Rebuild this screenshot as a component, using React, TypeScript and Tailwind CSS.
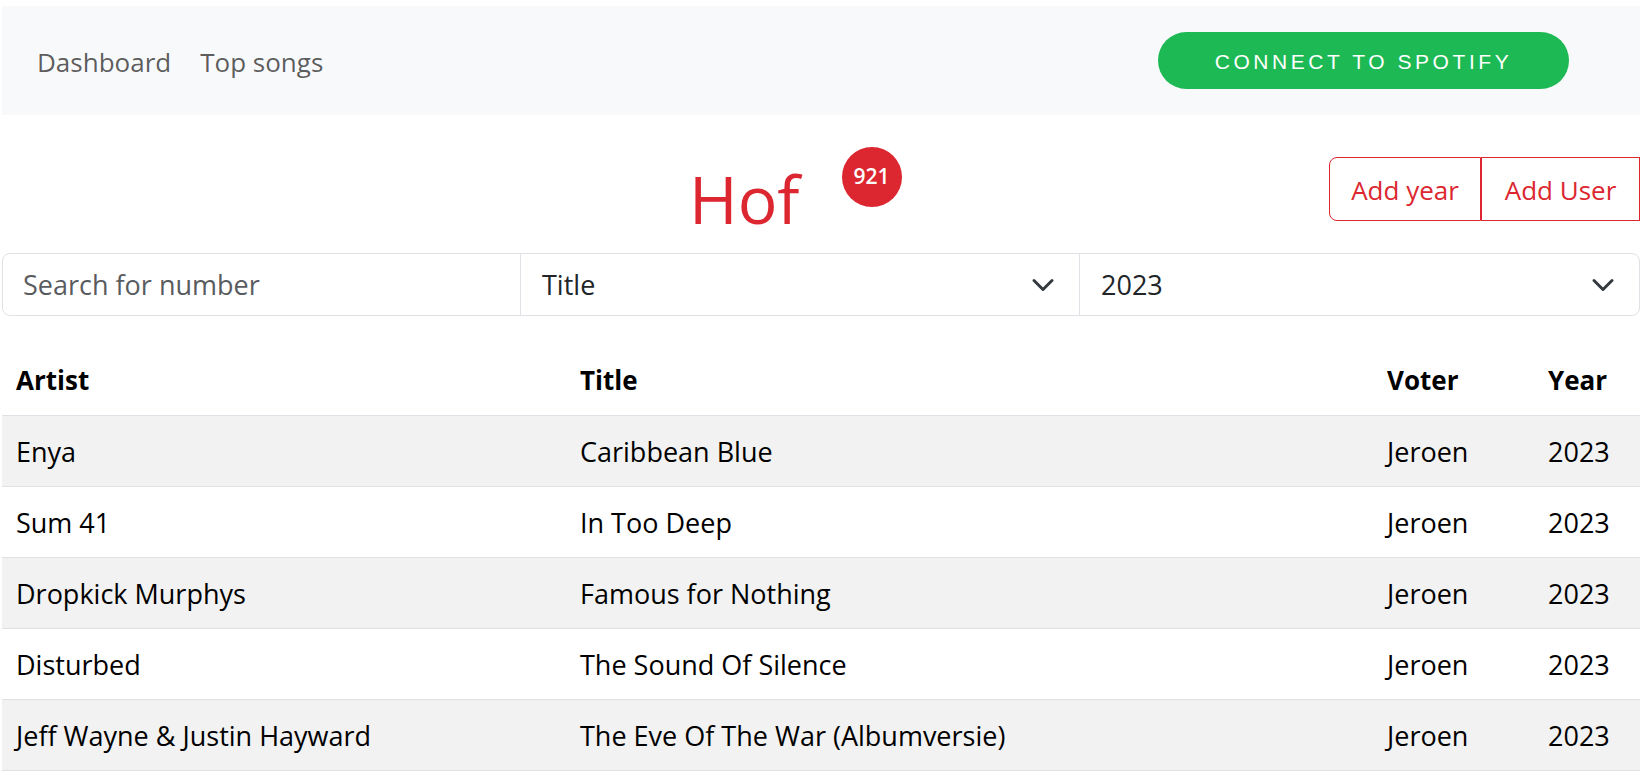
const songs = [
  { artist: 'Enya', title: 'Caribbean Blue', voter: 'Jeroen', year: '2023' },
  { artist: 'Sum 41', title: 'In Too Deep', voter: 'Jeroen', year: '2023' },
  { artist: 'Dropkick Murphys', title: 'Famous for Nothing', voter: 'Jeroen', year: '2023' },
  { artist: 'Disturbed', title: 'The Sound Of Silence', voter: 'Jeroen', year: '2023' },
  { artist: 'Jeff Wayne & Justin Hayward', title: 'The Eve Of The War (Albumversie)', voter: 'Jeroen', year: '2023' },
]

// bootstrap-style select chevron
function Chevron() {
  return (
    <svg viewBox="0 0 16 16" className="ml-auto h-[24px] w-[24px]" fill="none">
      <path d="M2 5l6 6 6-6" stroke="#343a40" strokeWidth={2} strokeLinecap="round" strokeLinejoin="round" />
    </svg>
  )
}

function SelectBox({ value, className }: { value: string; className: string }) {
  return (
    <div className={`flex items-center border-l border-[#dee2e6] pl-[21px] pr-[24px] ${className}`}>
      <span className="pt-[2px] text-[27px] text-[#212529]">{value}</span>
      <Chevron />
    </div>
  )
}

export default function App() {
  return (
    <div className="min-h-screen bg-white pl-[2px] pr-[6px] pt-[6px] font-['Open_Sans',sans-serif] text-[#212529]">
      {/* Navbar */}
      <nav className="flex h-[109px] items-center bg-[#f8f9fa] pl-[35px]">
        <a className="pt-[4px] text-[26px] text-black/65">Dashboard</a>
        <a className="ml-[29px] pt-[4px] text-[26px] text-black/65">Top songs</a>
        <button className="ml-auto mr-[71px] h-[57px] w-[411px] rounded-full bg-[#1db954] pt-[3px] font-['Liberation_Sans',Arial,sans-serif] text-[21px] uppercase tracking-[0.17em] text-white">
          Connect to Spotify
        </button>
      </nav>

      {/* Title + actions */}
      <div className="flex h-[138px] items-start">
        <h1 className="ml-[687px] mt-[50px] text-[66px] font-medium leading-none text-[#dc2630]">Hof</h1>
        <span className="ml-[42px] mt-[32px] flex h-[60px] w-[60px] items-center justify-center rounded-full bg-[#dc2630] text-[21px] font-semibold text-white">
          921
        </span>
        <div className="ml-auto mt-[42px] flex">
          <button className="h-[64px] w-[152px] rounded-l-[8px] border border-[#dc2630] pt-[2px] text-[26px] text-[#dc2630]">
            Add year
          </button>
          <button className="h-[64px] w-[159px] border border-[#dc2630] pt-[2px] text-[26px] text-[#dc2630]">
            Add User
          </button>
        </div>
      </div>

      {/* Search + filters */}
      <div className="flex h-[63px] rounded-[8px] border border-[#dee2e6]">
        <input
          placeholder="Search for number"
          className="w-[517px] bg-transparent pl-[20px] pt-[2px] text-[27px] outline-none placeholder:text-[#595c5f]"
        />
        <SelectBox value="Title" className="w-[559px]" />
        <SelectBox value="2023" className="flex-1" />
      </div>

      {/* Table */}
      <table className="mt-[28px] w-full border-collapse text-left text-[27px]">
        <thead>
          <tr className="h-[71px] border-b border-[#dee2e6]">
            <th className="w-[564px] px-[14px] pt-[3px] text-[26px] font-bold text-black">Artist</th>
            <th className="w-[807px] px-[14px] pt-[3px] text-[26px] font-bold text-black">Title</th>
            <th className="w-[161px] px-[14px] pt-[3px] text-[26px] font-bold text-black">Voter</th>
            <th className="px-[14px] pt-[3px] text-[26px] font-bold text-black">Year</th>
          </tr>
        </thead>
        <tbody>
          {songs.map((song, i) => (
            <tr key={song.artist} className={`h-[71px] border-b border-[#dee2e6] ${i % 2 === 0 ? 'bg-[#f2f2f2]' : 'bg-white'}`}>
              <td className="px-[14px] pt-[3px] text-black">{song.artist}</td>
              <td className="px-[14px] pt-[3px] text-black">{song.title}</td>
              <td className="px-[14px] pt-[3px] text-black">{song.voter}</td>
              <td className="px-[14px] pt-[3px] text-black">{song.year}</td>
            </tr>
          ))}
        </tbody>
      </table>
    </div>
  )
}
